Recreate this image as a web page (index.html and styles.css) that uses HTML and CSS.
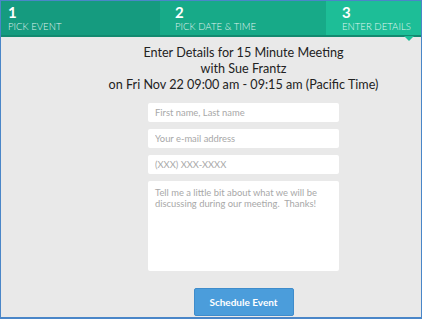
FILE: index.html
```html
<!DOCTYPE html>
<html>
<head>
<meta charset="utf-8">
<link rel="stylesheet" href="styles.css">
</head>
<body>
<div class="frame">
  <div class="steps">
    <div class="step s1"><div class="num">1</div><div class="lbl">PICK EVENT</div></div>
    <div class="step s2"><div class="num">2</div><div class="lbl">PICK DATE &amp; TIME</div></div>
    <div class="step s3"><div class="num">3</div><div class="lbl">ENTER DETAILS</div><span class="notch"></span></div>
  </div>
  <div class="content">
    <h1 class="title">Enter Details for 15 Minute Meeting<br>with Sue Frantz<br>on Fri Nov 22 09:00 am - 09:15 am (Pacific Time)</h1>
    <form class="form">
      <input class="field" type="text" placeholder="First name, Last name">
      <input class="field" type="text" placeholder="Your e-mail address">
      <input class="field" type="text" placeholder="(XXX) XXX-XXXX">
      <textarea class="area" placeholder="Tell me a little bit about what we will be discussing during our meeting.  Thanks!"></textarea>
      <button class="btn" type="button">Schedule Event</button>
    </form>
  </div>
</div>
</body>
</html>
```
FILE: styles.css
```css
html, body { margin: 0; padding: 0; }
body { width: 422px; height: 319px; overflow: hidden; font-family: Lato, "Open Sans", sans-serif; }
.frame {
  box-sizing: border-box;
  width: 422px; height: 319px;
  border: 1px solid #4a86c8;
  border-bottom-width: 2px;
  background: #e9e9e9;
  display: flex; flex-direction: column;
}
.steps { display: flex; height: 36px; border-bottom: 2px solid #128a70; box-sizing: border-box; }
.step { position: relative; padding: 4px 0 0 7px; box-sizing: border-box; color: #fff; }
.s1 { width: 159px; background: #159b7f; }
.s2 { width: 166px; background: #17aa88; padding-left: 15px; }
.s3 { flex: 1; background: #1dbe97; padding-left: 16px; }
.num { font-size: 15px; font-weight: 700; line-height: 15px; }
.lbl { font-size: 9.6px; font-weight: 300; line-height: 12px; margin-top: 1px; color: rgba(255,255,255,0.88); }
.notch {
  position: absolute; left: 78px; bottom: -6px;
  width: 0; height: 0;
  border-left: 5px solid transparent; border-right: 5px solid transparent;
  border-top: 5px solid #1dbe97;
}
.content { display: flex; flex-direction: column; align-items: center; padding-left: 65px; padding-top: 8px; }
.title { margin: 0; font-size: 12.6px; font-weight: 400; line-height: 16px; text-align: center; color: #222; }
.form { display: flex; flex-direction: column; align-items: center; margin-top: 10px; }
.field, .area {
  box-sizing: border-box; width: 191px; border: none; border-radius: 2px; background: #fff;
  font-family: Lato, sans-serif; font-size: 9.4px; color: #333; padding: 0 7px; outline: none;
}
.field { height: 19px; margin-bottom: 7px; }
.area { height: 90px; padding-top: 6px; resize: none; line-height: 11px; }
.field::placeholder, .area::placeholder { color: #a8a8a8; }
.btn {
  margin-top: 17px; width: 100px; height: 28px; border-radius: 2px;
  background: #4b9ddb; color: #fff; font-family: Lato, sans-serif; font-size: 10px; font-weight: 700;
  border: 1px solid #3f8ccb;
}
```
